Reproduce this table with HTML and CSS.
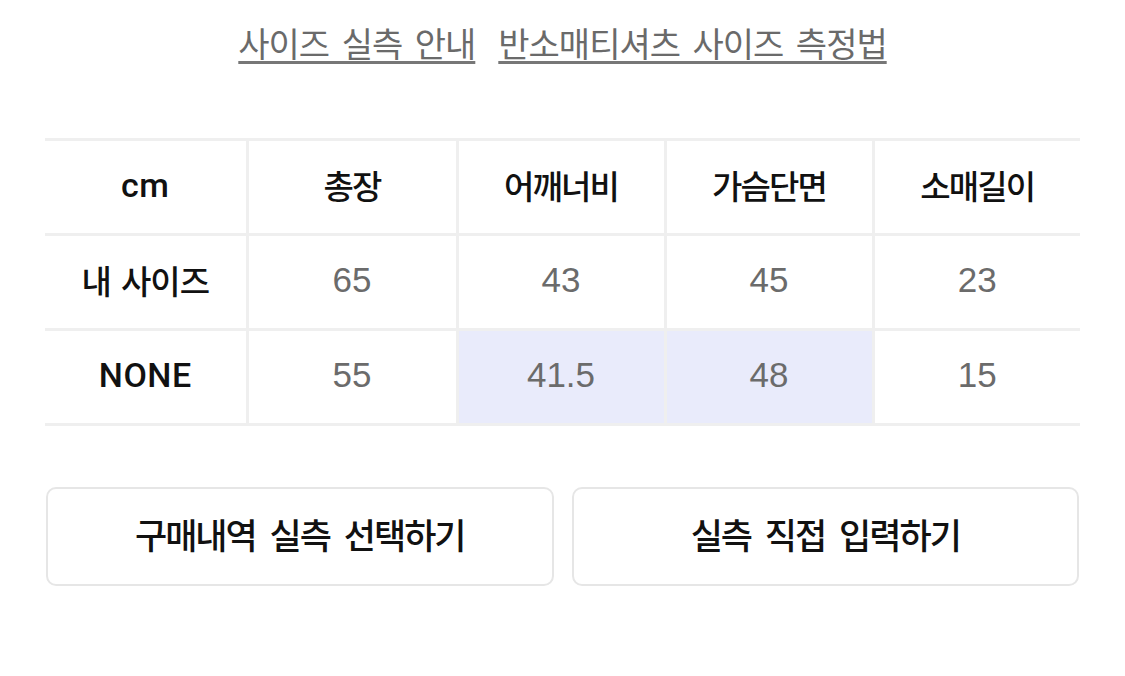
FILE: index.html
```html
<!DOCTYPE html>
<html lang="ko">
<head>
<meta charset="utf-8">
<link rel="stylesheet" href="styles.css">
</head>
<body>
<div class="page">
  <nav class="links">
    <a class="link" href="#">사이즈 실측 안내</a>
    <a class="link" href="#">반소매티셔츠 사이즈 측정법</a>
  </nav>
  <table class="size-table">
    <colgroup>
      <col class="c0"><col class="c1"><col class="c2"><col class="c3"><col class="c4">
    </colgroup>
    <tr class="head">
      <th class="first latin">cm</th><th>총장</th><th>어깨너비</th><th>가슴단면</th><th class="last">소매길이</th>
    </tr>
    <tr>
      <th class="first">내 사이즈</th><td>65</td><td>43</td><td>45</td><td class="last">23</td>
    </tr>
    <tr>
      <th class="first latin">NONE</th><td>55</td><td class="hl">41.5</td><td class="hl">48</td><td class="last">15</td>
    </tr>
  </table>
  <div class="buttons">
    <button class="btn">구매내역 실측 선택하기</button>
    <button class="btn">실측 직접 입력하기</button>
  </div>
</div>
</body>
</html>
```
FILE: styles.css
```css
html, body {
  margin: 0;
  padding: 0;
  background: #ffffff;
}
body {
  font-family: "Noto Sans CJK KR", Roboto, sans-serif;
}
.page {
  width: 1125px;
  height: 676px;
  padding: 0 45px;
  box-sizing: border-box;
}
.links {
  display: flex;
  justify-content: center;
  gap: 23px;
  padding-top: 19px;
  height: 138px;
  box-sizing: border-box;
}
.link {
  color: #6a6a6a;
  font-size: 34px;
  letter-spacing: -1px;
  word-spacing: 4px;
  line-height: 48px;
  height: 50px;
  text-decoration: underline;
  text-decoration-thickness: 3px;
  text-underline-offset: 4px;
  text-decoration-color: #777;
}
.size-table {
  width: 1035px;
  border-collapse: collapse;
  table-layout: fixed;
  border-top: 3px solid #efefef;
}
.c0 { width: 202px; }
.c1 { width: 210px; }
.c2 { width: 208px; }
.c3 { width: 208px; }
.c4 { width: 207px; }
.size-table th,
.size-table td {
  height: 87px;
  padding: 0 0 5px;
  text-align: center;
  border-bottom: 3px solid #efefef;
  border-left: 3px solid #efefef;
}
.size-table .first {
  border-left: none;
}
.size-table th {
  font-weight: 500;
  color: #111;
  font-size: 33px;
  letter-spacing: -1.8px;
}
.size-table th.first {
  letter-spacing: -1px;
  word-spacing: 2px;
}
.size-table th.latin {
  font-family: Roboto, "Liberation Sans", sans-serif;
  font-size: 34px;
  letter-spacing: 0.5px;
  font-weight: 500;
}
.size-table td {
  font-family: "Liberation Sans", Arial, sans-serif;
  font-size: 35px;
  color: #6b6b6b;
}
.size-table td.hl {
  background: #e9ebfb;
}
.buttons {
  display: flex;
  gap: 18px;
  margin-top: 61px;
  padding-left: 1px;
  padding-right: 1px;
}
.btn {
  flex: 1;
  height: 99px;
  background: #fff;
  border: 2px solid #e6e6e6;
  border-radius: 10px;
  font-family: "Noto Sans CJK KR", sans-serif;
  font-size: 35px;
  font-weight: 500;
  color: #111;
  letter-spacing: -2px;
  word-spacing: 6px;
  padding: 0 0 6px;
}
```
